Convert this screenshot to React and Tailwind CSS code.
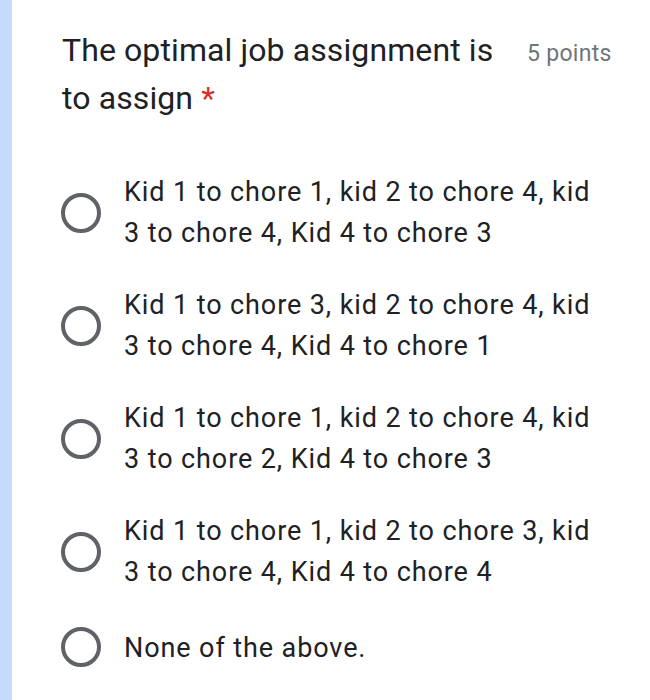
const options = [
  ["Kid 1 to chore 1, kid 2 to chore 4, kid", "3 to chore 4, Kid 4 to chore 3"],
  ["Kid 1 to chore 3, kid 2 to chore 4, kid", "3 to chore 4, Kid 4 to chore 1"],
  ["Kid 1 to chore 1, kid 2 to chore 4, kid", "3 to chore 2, Kid 4 to chore 3"],
  ["Kid 1 to chore 1, kid 2 to chore 3, kid", "3 to chore 4, Kid 4 to chore 4"],
];

function Radio() {
  return <span className="block h-[40px] w-[40px] shrink-0 rounded-full border-[4px] border-[#5f6368]" />;
}

export default function App() {
  return (
    <div className="flex min-h-[700px] w-[650px] bg-white font-['Roboto',sans-serif] text-[#202124]">
      <div className="w-3 shrink-0 bg-[#c6dafc]" />
      <div className="flex-1 pl-[50px] pt-[26px]">
        <div className="flex items-start">
          <h1 className="w-[465px] text-[32px] leading-[48px] tracking-[0.1px]">
            The optimal job assignment is to assign <span className="text-[#d93025]">*</span>
          </h1>
          <span className="mt-[13px] text-[23px] leading-[30px] tracking-[0.3px] text-[#70757a]">5 points</span>
        </div>

        <ul className="mt-[50px] flex flex-col gap-[31px]">
          {options.map((lines, i) => (
            <li key={i} className="flex items-center">
              <span className="ml-[-1px] mr-[23px]"><Radio /></span>
              <p className="text-[27px] leading-[41px] tracking-[0.9px]">
                {lines[0]}
                <br />
                {lines[1]}
              </p>
            </li>
          ))}
          <li className="flex items-center">
            <span className="ml-[-1px] mr-[23px]"><Radio /></span>
            <p className="mt-[4px] text-[27px] leading-[41px] tracking-[0.9px]">None of the above.</p>
          </li>
        </ul>
      </div>
    </div>
  );
}
